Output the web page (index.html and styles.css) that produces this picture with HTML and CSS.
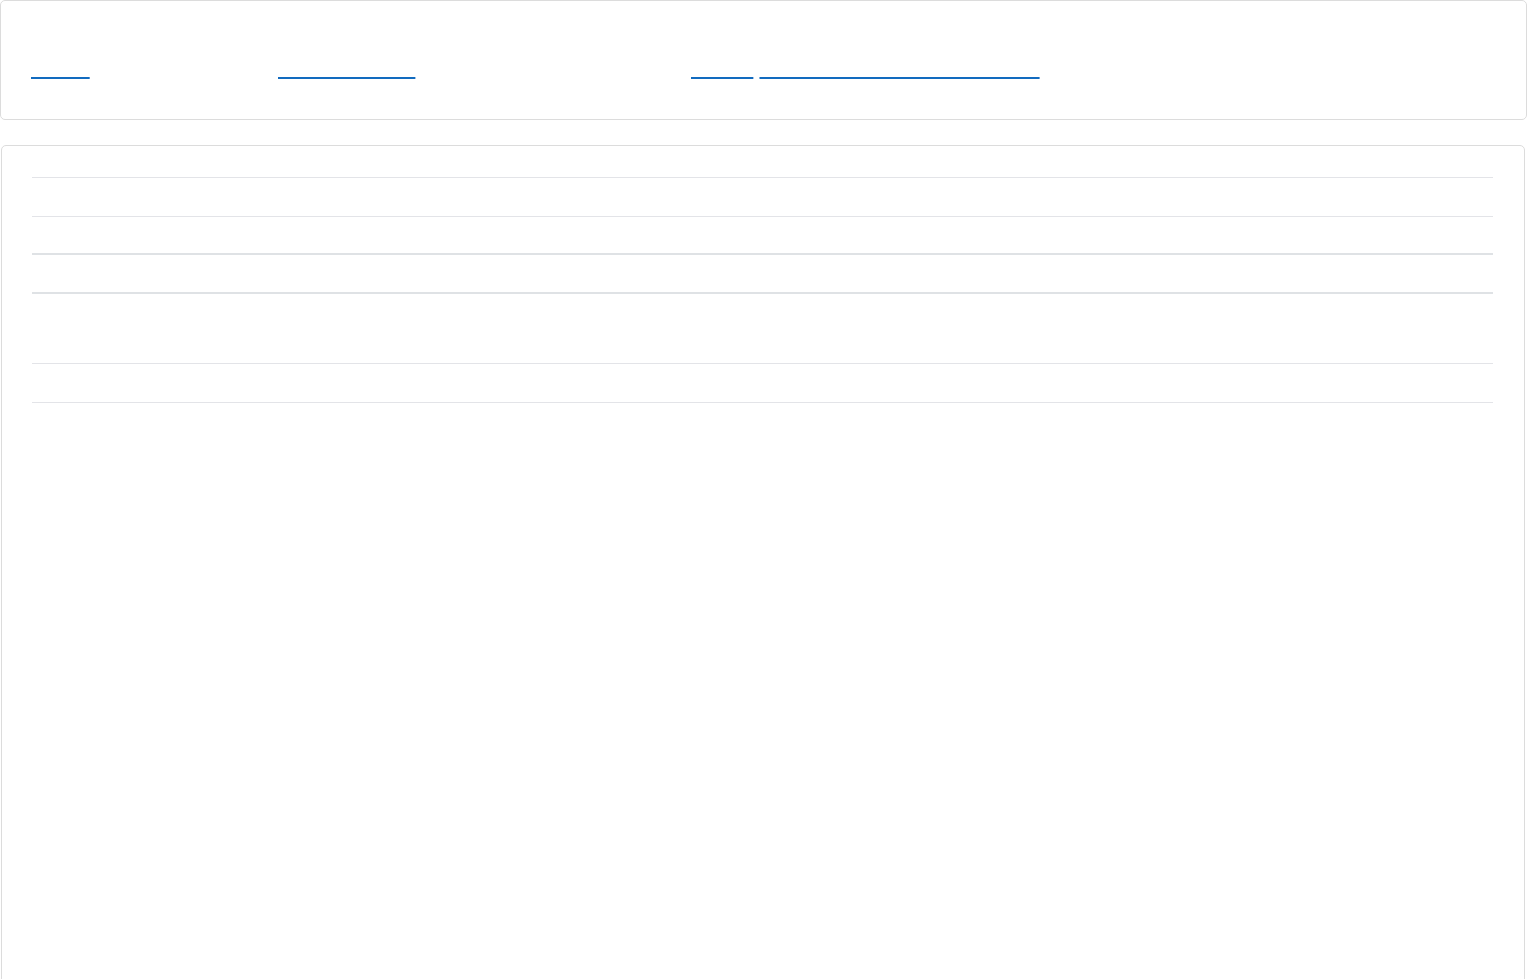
FILE: index.html
```html
<!DOCTYPE html>
<html lang="en">
<head>
    <meta charset="UTF-8">
    <meta name="viewport" content="width=device-width, initial-scale=1.0">
    <title>Account</title>
    <link rel="stylesheet" href="styles.css">
</head>
<body>
    <div class="card top-nav">
        <div class="nav-col"><a href="#">Home</a></div>
        <div class="nav-col"><a href="#">Your Products</a></div>
        <div class="nav-col"><a href="#">Admin</a> <a href="#">Logged in as Sarah Johnson</a></div>
    </div>

    <div class="card details">
        <div class="row"><span class="label">Name</span><span class="value">Sarah Johnson</span></div>
        <div class="row short"><span class="label">Email</span><span class="value">sarah@example.com</span></div>
        <div class="row thick"><span class="label">Role</span><span class="value">Admin</span></div>
        <div class="row thick tall"><span class="label">Address</span><span class="value">Main Street 1<br>1000 AA City</span></div>
        <div class="row last"><span class="label">Member since</span><span class="value">2021</span></div>
    </div>
</body>
</html>
```

FILE: styles.css
```css
body {
    margin: 0;
    font-family: "Liberation Sans", Arial, sans-serif;
    background: #fff;
    color: #fff;
}

.card {
    border: 1px solid #dcdcdc;
    border-radius: 5px;
    background: #fff;
}

.top-nav {
    display: grid;
    grid-template-columns: 247px 413px auto;
    padding: 55px 30px 37px;
    font-size: 22px;
}

.top-nav a {
    color: transparent;
    text-decoration: underline;
    text-decoration-color: #126bbf;
    text-decoration-thickness: 2px;
    text-decoration-skip-ink: none;
}

.details {
    margin: 25px 2px 0 1px;
    padding: 31px 31px 0 30px;
    min-height: 900px;
    font-size: 16px;
}

.row {
    display: flex;
    border-top: 1px solid #e3e4e8;
    padding: 8px 0;
    line-height: 22px;
}

.row.short {
    padding: 7px 0;
}

.row.thick {
    border-top: 2px solid #dfe2e5;
    padding: 7px 0 8px;
}

.row.tall {
    padding: 13px 0 12px;
    line-height: 22px;
}

.row.last {
    border-bottom: 1px solid #e3e4e8;
}

.label {
    width: 250px;
}
```
